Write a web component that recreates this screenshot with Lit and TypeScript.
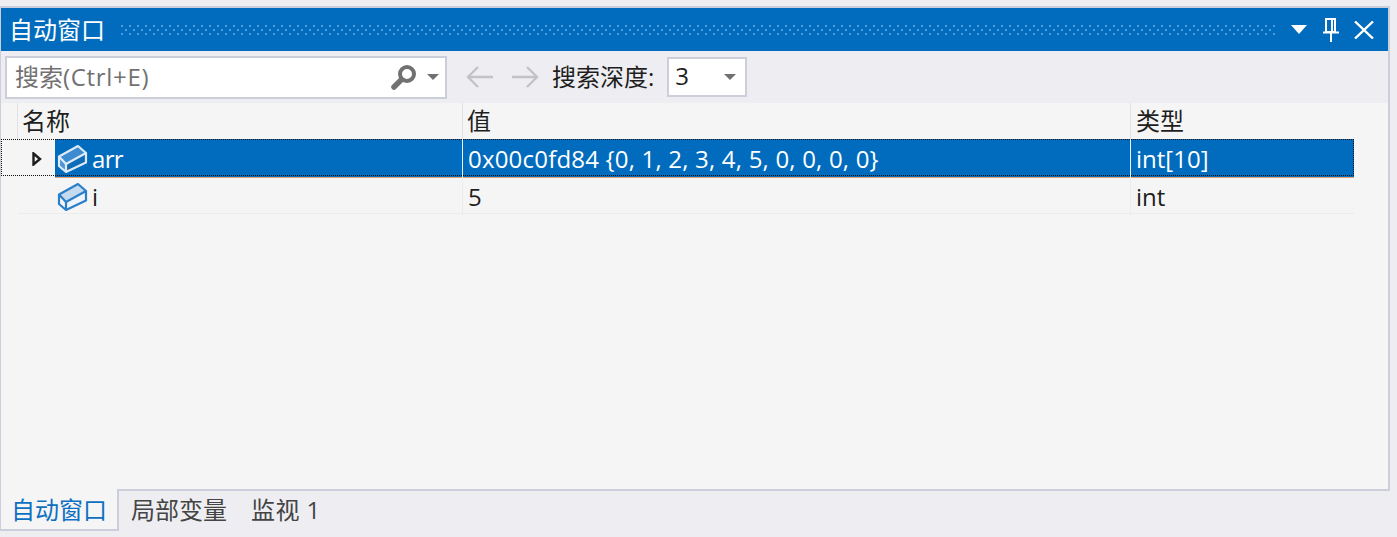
import { LitElement, html, css, svg } from "lit";
import { customElement } from "lit/decorators.js";

const cube = (dark: boolean) => svg`<svg class="cube" width="32" height="32" viewBox="0 0 32 32">
  <path d="M3 14.5 L22 4 L30 11 L30 20.5 L10 30 L3 24 Z" fill="${dark ? "#0f6cb8" : "#eef4fa"}" stroke="none"/>
  <path d="M3 14.5 L22 4 L30 11 L10 22 Z" fill="${dark ? "#3c8ad0" : "#c5daee"}"/>
  <path d="M3 14.5 L10 22 L10 30 L3 24 Z" fill="${dark ? "#4f94d4" : "#f5f5f5"}"/>
  <path d="M3 14.5 L22 4 L30 11 L30 20.5 L10 30 L3 24 Z M3 14.5 L10 22 L30 11 M10 22 L10 30" fill="none" stroke="${dark ? "#dfeaf6" : "#2a7fc8"}" stroke-width="2.2" stroke-linejoin="round"/>
</svg>`;

@customElement("app-root")
export class AppRoot extends LitElement {
  static styles = css`
    :host { display: block; width: 1397px; height: 537px; background: #eeeef2; overflow: hidden;
      font-family: "Open Sans", "Noto Sans CJK SC", sans-serif; font-size: 24px; color: #1e1e1e; }
    * { box-sizing: border-box; }
    .top { height: 6px; }
    .win { width: 1390px; height: 485px; border: 1px solid #cccedb; border-top-width: 2px; border-bottom-width: 2px; border-right-width: 2px; display: flex; flex-direction: column; background: #f5f5f5; }
    .title { height: 43px; background: #016cbd; color: #fff; display: flex; align-items: center; padding: 0 8px 0 8px; flex: none; }
    .title .name { width: 112px; line-height: 43px; white-space: nowrap; flex: none; }
    .grip { display: block; width: 1155px; height: 10px; margin-top: 0; flex: none; }
    .btns { display: flex; align-items: center; flex: 1; height: 100%; }
    .btns svg { display: block; flex: none; }
    .b1 { margin-left: 14px; }
    .b2 { margin-left: 15px; }
    .b3 { margin-left: 15px; }
    .toolbar { height: 52px; background: #eeeef2; display: flex; align-items: center; flex: none; padding-left: 4px; }
    .search { width: 442px; height: 43px; background: #fff; border: 2px solid #cccedb; display: flex; align-items: center; padding: 0 6px 0 8px; color: #717171; }
    .search .ph { flex: 1; margin-top: -4px; }
    .search .lat { letter-spacing: 0.7px; }
    .search svg { display: block; margin-right: 10px; }
    .arrows { display: flex; align-items: center; gap: 15px; margin-left: 18px; }
    .arrows svg { display: block; }
    .depth { margin-left: 12px; white-space: nowrap; margin-top: -4px; }
    .combo { width: 80px; height: 40px; margin-left: 13px; background: #fff; border: 2px solid #cccedb; display: flex; align-items: center; justify-content: space-between; padding: 0 9px 0 6px; }
    .combo span { margin-top: -3px; }
    .tri { width: 0; height: 0; border-left: 6px solid transparent; border-right: 6px solid transparent; border-top: 6px solid #717171; flex: none; }
    .grid { flex: 1; display: flex; flex-direction: column; min-height: 0; }
    .row { display: grid; flex: none; }
    .head { height: 36px; line-height: 36px; grid-template-columns: 17px 445px 668px 260px; }
    .head > div { border-right: 1px solid #e2e2e6; }
    .head .n { padding-left: 4px; }
    .head .v { padding-left: 4px; }
    .head .t { padding-left: 5px; border-right: none; }
    .data { width: 1353px; }
    .row .cell { line-height: 36px; padding: 2px 0 0 5px; white-space: nowrap; }
    .val { letter-spacing: 0.2px; }
    .data .nm { display: flex; align-items: center; padding-left: 1px; gap: 4px; white-space: nowrap; line-height: 36px; }
    .data .nm span { padding-top: 2px; }
    .arr { letter-spacing: -0.7px; }
    .data.sel { height: 37px; grid-template-columns: 54px 407px 668px 224px; outline: 1px dotted #111; outline-offset: -1px; }
    .data.sel .exp { display: flex; align-items: center; justify-content: flex-end; padding-right: 13px; }
    .data.sel .nm, .data.sel .cell { background: #016cbd; color: #fff; border-bottom: 1px solid #e9a06a; }
    .data.sel .cell { border-left: 1px solid #e8f0f8; }
    .data.plain { height: 38px; border-bottom: 1px solid #ececee; margin-left: 17px; width: 1336px; grid-template-columns: 37px 407px 668px 224px; }
    .data.plain .cell { border-left: 1px solid #ececee; padding-top: 3px; }
    .data.plain .nm span { padding-top: 3px; }
    .cube { display: block; flex: none; }
    .tabs { height: 42px; display: flex; margin-top: -2px; flex: none; }
    .tab { height: 42px; line-height: 42px; white-space: nowrap; color: #444; }
    .tab.on { width: 119px; background: #f5f5f5; color: #0e70c0; border-right: 2px solid #cccedb; border-bottom: 2px solid #cccedb; border-left: 1px solid #cccedb; padding-left: 10px; }
    .tab.o1 { margin-left: 12px; width: 120px; }
    .tab.o2 { letter-spacing: 0.4px; }
  `;

  render() {
    return html`<div class="top"></div>
      <div class="win">
        <div class="title">
          <div class="name">自动窗口</div>
          <svg class="grip" width="1155" height="10">
            <defs><pattern id="dots" width="8" height="8" patternUnits="userSpaceOnUse">
              <rect x="0" y="0" width="2" height="2" fill="#4f9bdc"/><rect x="4" y="4" width="2" height="2" fill="#4f9bdc"/>
            </pattern></defs>
            <rect width="1155" height="10" fill="url(#dots)"/>
          </svg>
          <div class="btns">
            <svg class="b1" width="18" height="10" viewBox="0 0 18 10"><path d="M1 0H17L9 9Z" fill="#fff"/></svg>
            <svg class="b2" width="16" height="24" viewBox="0 0 16 24"><path d="M3 1H12V14H3Z M9 1V14" fill="none" stroke="#fff" stroke-width="2"/><path d="M0 14.5H16M8 15V24" stroke="#fff" stroke-width="2" fill="none"/></svg>
            <svg class="b3" width="20" height="18" viewBox="0 0 20 18"><path d="M1 0.5L19 17.5M19 0.5L1 17.5" stroke="#fff" stroke-width="2.4" fill="none"/></svg>
          </div>
        </div>
        <div class="toolbar">
          <div class="search">
            <span class="ph">搜索<span class="lat">(Ctrl+E)</span></span>
            <svg width="26" height="26" viewBox="0 0 26 26"><circle cx="16" cy="10" r="7" fill="none" stroke="#717171" stroke-width="4"/><path d="M10 16L3 23" stroke="#717171" stroke-width="5.5" stroke-linecap="round"/></svg>
            <div class="tri"></div>
          </div>
          <div class="arrows">
            <svg width="30" height="24" viewBox="0 0 30 24"><path d="M28 12H3M13 2L3 12L13 22" fill="none" stroke="#c3c3c5" stroke-width="2.4"/></svg>
            <svg width="30" height="24" viewBox="0 0 30 24"><path d="M2 12H27M17 2L27 12L17 22" fill="none" stroke="#c3c3c5" stroke-width="2.4"/></svg>
          </div>
          <div class="depth">搜索深度:</div>
          <div class="combo"><span>3</span><div class="tri"></div></div>
        </div>
        <div class="grid">
          <div class="row head">
            <div></div>
            <div class="n">名称</div>
            <div class="v">值</div>
            <div class="t">类型</div>
          </div>
          <div class="row data sel">
            <div class="exp"><svg width="10" height="14" viewBox="0 0 10 14"><path d="M1.5 1.5L8 7L1.5 12.5Z" fill="none" stroke="#1e1e1e" stroke-width="2.4"/></svg></div>
            <div class="nm">${cube(true)}<span class="arr">arr</span></div>
            <div class="cell val">0x00c0fd84 {0, 1, 2, 3, 4, 5, 0, 0, 0, 0}</div>
            <div class="cell">int[10]</div>
          </div>
          <div class="row data plain">
            <div></div>
            <div class="nm">${cube(false)}<span>i</span></div>
            <div class="cell">5</div>
            <div class="cell">int</div>
          </div>
        </div>
      </div>
      <div class="tabs">
        <div class="tab on">自动窗口</div>
        <div class="tab o1">局部变量</div>
        <div class="tab o2">监视 1</div>
      </div>`;
  }
}
